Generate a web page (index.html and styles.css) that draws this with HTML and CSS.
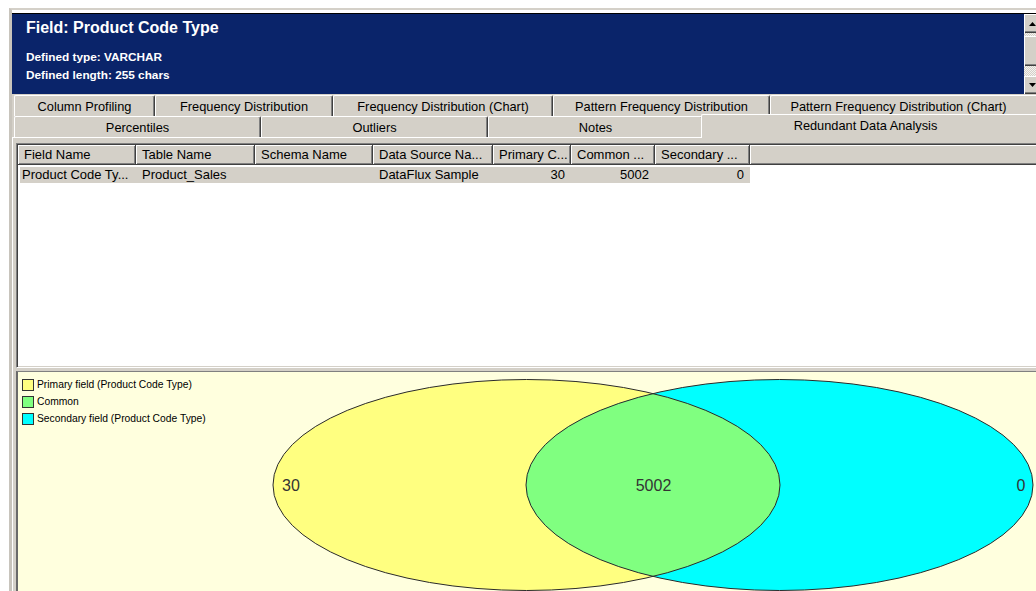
FILE: index.html
```html
<!DOCTYPE html>
<html lang="en">
<head>
<meta charset="utf-8">
<title>Field: Product Code Type</title>
<link rel="stylesheet" href="styles.css">
</head>
<body>
<div class="window">
  <header class="field-header">
    <div class="field-info">
      <h1 class="field-title">Field: Product Code Type</h1>
      <p class="field-meta first">Defined type: VARCHAR</p>
      <p class="field-meta">Defined length: 255 chars</p>
    </div>
    <div class="vscroll">
      <div class="sb-btn sb-up">
        <svg width="7" height="4" viewBox="0 0 7 4"><polygon points="0,4 3.5,0 7,4" fill="#000"/></svg>
      </div>
      <div class="sb-track sb-gap"></div>
      <div class="sb-thumb"></div>
      <div class="sb-track sb-fill"></div>
      <div class="sb-btn sb-down">
        <svg width="7" height="4" viewBox="0 0 7 4"><polygon points="0,0 7,0 3.5,4" fill="#000"/></svg>
      </div>
    </div>
  </header>

  <nav class="tabstrip">
    <div class="tab-row">
      <div class="tab t-profiling">Column Profiling</div>
      <div class="tab t-freq">Frequency Distribution</div>
      <div class="tab t-freq-chart">Frequency Distribution (Chart)</div>
      <div class="tab t-pattern">Pattern Frequency Distribution</div>
      <div class="tab t-pattern-chart">Pattern Frequency Distribution (Chart)</div>
    </div>
    <div class="tab-row">
      <div class="tab t-percentiles">Percentiles</div>
      <div class="tab t-outliers">Outliers</div>
      <div class="tab t-notes">Notes</div>
      <div class="tab active">Redundant Data Analysis</div>
    </div>
  </nav>

  <section class="tab-panel">
    <div class="listview">
      <div class="lv-header">
        <div class="lv-col c-field">Field Name</div>
        <div class="lv-col c-table">Table Name</div>
        <div class="lv-col c-schema">Schema Name</div>
        <div class="lv-col c-source">Data Source Na...</div>
        <div class="lv-col c-primary">Primary C...</div>
        <div class="lv-col c-common">Common ...</div>
        <div class="lv-col c-secondary">Secondary ...</div>
        <div class="lv-col c-filler"></div>
      </div>
      <div class="lv-row selected">
        <div class="lv-cell c-field">Product Code Ty...</div>
        <div class="lv-cell c-table">Product_Sales</div>
        <div class="lv-cell c-schema"></div>
        <div class="lv-cell c-source">DataFlux Sample</div>
        <div class="lv-cell c-primary num">30</div>
        <div class="lv-cell c-common num">5002</div>
        <div class="lv-cell c-secondary num">0</div>
      </div>
    </div>

    <div class="splitter"></div>

    <div class="venn">
      <svg class="venn-chart" width="1018" height="219" viewBox="0 0 1018 219">
        <defs>
          <clipPath id="primary-area">
            <ellipse cx="508.5" cy="113" rx="253.5" ry="105.5"/>
          </clipPath>
        </defs>
        <ellipse cx="508.5" cy="113" rx="253.5" ry="105.5" fill="#ffff80"/>
        <ellipse cx="761.5" cy="113" rx="253.5" ry="105.5" fill="#00ffff"/>
        <ellipse cx="761.5" cy="113" rx="253.5" ry="105.5" fill="#80ff80" clip-path="url(#primary-area)"/>
        <ellipse cx="508.5" cy="113" rx="253.5" ry="105.5" fill="none" stroke="#2a2a2a" stroke-width="1"/>
        <ellipse cx="761.5" cy="113" rx="253.5" ry="105.5" fill="none" stroke="#2a2a2a" stroke-width="1"/>
        <text class="venn-label" x="264" y="119">30</text>
        <text class="venn-label" x="635.5" y="119" text-anchor="middle">5002</text>
        <text class="venn-label" x="1003" y="119" text-anchor="middle">0</text>
      </svg>
      <ul class="legend">
        <li><span class="swatch sw-primary"></span>Primary field (Product Code Type)</li>
        <li><span class="swatch sw-common"></span>Common</li>
        <li><span class="swatch sw-secondary"></span>Secondary field (Product Code Type)</li>
      </ul>
    </div>
  </section>
</div>
</body>
</html>
```

FILE: styles.css
```css
html, body {
  margin: 0;
  height: 100%;
  overflow: hidden;
  background: #fff;
}

body {
  font-family: "Liberation Sans", Arial, sans-serif;
  color: #000;
}

/* outer window frame */
.window {
  margin: 8px 0 0 9px;
  width: 1032px;
  height: calc(100vh - 8px);
  box-sizing: border-box;
  border-top: 2px solid #d4d0c8;
  border-left: 3px solid #c8c4bc;
  padding-top: 3px;
  display: flex;
  flex-direction: column;
}

/* navy field header */
.field-header {
  flex: none;
  display: flex;
  height: 81px;
  box-sizing: border-box;
  border-top: 1px solid #000;
  background: #0a246a;
  color: #fff;
}

.field-info {
  flex: 1;
  padding: 4px 0 0 14px;
}

.field-title {
  margin: 0;
  font-size: 16px;
  font-weight: bold;
  line-height: 20px;
}

.field-meta {
  margin: 0;
  font-size: 11.8px;
  font-weight: bold;
  line-height: 18px;
}

.field-meta.first {
  margin-top: 10px;
}

/* header scrollbar */
.vscroll {
  flex: none;
  width: 17px;
  display: flex;
  flex-direction: column;
  background: #d4d0c8;
}

.sb-btn,
.sb-thumb {
  box-sizing: border-box;
  background: #d4d0c8;
  box-shadow: inset 1px 1px #fff, inset -1px -1px #404040, inset -2px -2px #808080;
}

.sb-btn {
  display: flex;
  align-items: center;
  justify-content: center;
}

.sb-up { height: 19px; }
.sb-down { height: 18px; }
.sb-thumb { height: 30px; }
.sb-gap { height: 3px; }
.sb-fill { flex: 1; }

.sb-track {
  background: repeating-conic-gradient(#d4d0c8 0 25%, #f4f3f0 0 50%) 0 0 / 2px 2px;
}

/* two-row tab strip */
.tabstrip {
  flex: none;
  background: #d4d0c8;
  padding: 1px 0 0 2px;
}

.tab-row {
  display: flex;
  align-items: flex-start;
  height: 21px;
}

.tab {
  flex: none;
  box-sizing: border-box;
  height: 21px;
  padding-top: 2px;
  border-top: 1px solid #fff;
  border-left: 1px solid #fff;
  border-right: 1px solid #404040;
  box-shadow: inset -1px 0 #808080;
  border-radius: 2px 2px 0 0;
  background: #d4d0c8;
  text-align: center;
  font-size: 12.8px;
  line-height: 18px;
  white-space: nowrap;
}

.t-profiling { width: 141px; }
.t-freq { width: 178px; }
.t-freq-chart { width: 220px; }
.t-pattern { width: 217px; }
.t-pattern-chart {
  flex: 1;
  padding-right: 15px;
  border-right: none;
  box-shadow: none;
}

.t-percentiles { width: 247px; }
.t-outliers { width: 227px; }
.t-notes { width: 215px; }

.tab.active {
  flex: 1;
  position: relative;
  z-index: 2;
  height: 24px;
  margin: -2px 0 0 -2px;
  padding-right: 12px;
  border-right: none;
  box-shadow: none;
}

/* tab page */
.tab-panel {
  flex: 1;
  display: flex;
  flex-direction: column;
  min-height: 0;
  background: #d4d0c8;
  border-top: 1px solid #fff;
  border-left: 1px solid #fff;
  padding: 5px 0 0 3px;
}

/* results list */
.listview {
  flex: none;
  height: 225px;
  box-sizing: border-box;
  padding: 1px 0 0 1px;
  background: #fff;
  border: 1px solid;
  border-color: #808080 #fff #fff #808080;
  box-shadow: inset 1px 1px #404040, inset -1px -1px #d4d0c8;
  font-size: 13px;
  overflow: hidden;
}

.lv-header {
  display: flex;
  height: 20px;
}

.lv-col {
  flex: none;
  box-sizing: border-box;
  height: 20px;
  padding-left: 6px;
  background: #d4d0c8;
  border-right: 1px solid #404040;
  border-bottom: 1px solid #404040;
  box-shadow: inset 1px 1px #fff, inset -1px -1px #808080;
  line-height: 19px;
  white-space: nowrap;
  overflow: hidden;
}

.c-field { width: 118px; }
.c-table { width: 119px; }
.c-schema { width: 118px; }
.c-source { width: 120px; }
.c-primary { width: 78px; }
.c-common { width: 84px; }
.c-secondary { width: 95px; }
.c-filler { flex: 1; border-right: none; }

.lv-row {
  display: flex;
  width: 730px;
  height: 16px;
  margin: 2px 0 0 2px;
  line-height: 16px;
}

.lv-row.selected {
  background: #d4d0c8;
}

.lv-cell {
  flex: none;
  box-sizing: border-box;
  padding: 0 6px;
  white-space: nowrap;
  overflow: hidden;
}

.lv-cell.c-field {
  width: 116px;
  padding-left: 2px;
}

.lv-cell.num {
  text-align: right;
}

.splitter {
  flex: none;
  height: 3px;
}

/* overlap chart */
.venn {
  flex: 1;
  position: relative;
  background: #ffffde;
  border-style: solid;
  border-width: 1px 0 0 2px;
  border-color: #808080 #808080 #808080 #6a6a6a;
  overflow: hidden;
}

.venn-chart {
  display: block;
}

.venn-label {
  font-family: "Liberation Sans", Arial, sans-serif;
  font-size: 16px;
  fill: #333;
}

.legend {
  position: absolute;
  top: 4px;
  left: 4px;
  margin: 0;
  padding: 0;
  list-style: none;
  font-size: 10.3px;
  line-height: 17px;
}

.legend li {
  display: flex;
  align-items: center;
  white-space: nowrap;
}

.swatch {
  width: 12px;
  height: 12px;
  box-sizing: border-box;
  margin-right: 3px;
  border: 1px solid #333;
}

.sw-primary { background: #ffff80; }
.sw-common { background: #80ff80; }
.sw-secondary { background: #00ffff; }
```
